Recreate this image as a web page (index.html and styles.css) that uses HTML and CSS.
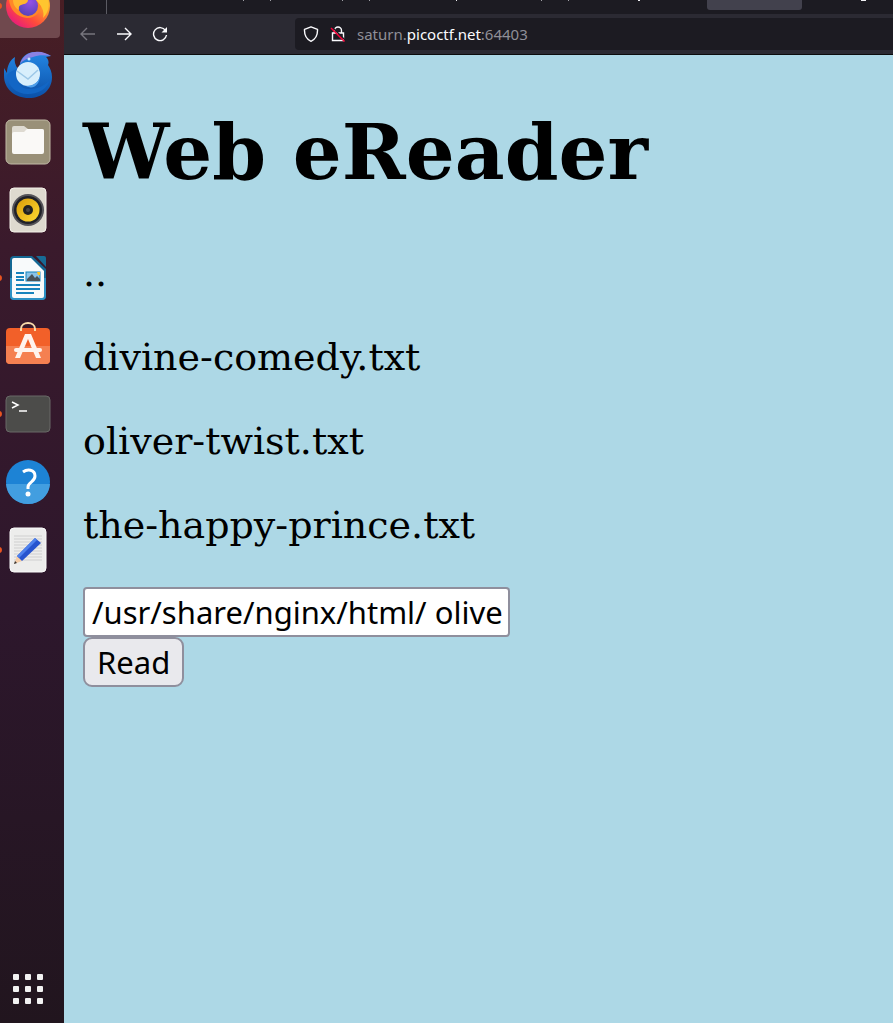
FILE: index.html
```html
<!DOCTYPE html>
<html lang="en">
<head>
<meta charset="utf-8">
<title>Web eReader</title>
<link rel="stylesheet" href="styles.css">
</head>
<body>
<div class="desktop">
  <nav class="dock" aria-label="Dock">
    <button class="dock-item dock-item-active" aria-label="Firefox">
      <svg class="firefox" viewBox="0 0 60 38">
        <defs>
          <linearGradient id="fx" x1="1" y1="0" x2="0.2" y2="1"><stop offset="0" stop-color="#ffd83a"/><stop offset=".4" stop-color="#ff9a2c"/><stop offset=".7" stop-color="#ff4a3c"/><stop offset="1" stop-color="#e31587"/></linearGradient>
          <radialGradient id="fp" cx=".6" cy=".3" r=".7"><stop offset="0" stop-color="#9450e8"/><stop offset="1" stop-color="#5944b8"/></radialGradient>
        </defs>
        <circle cx="-1" cy="6" r="3" fill="#e95420"/>
        <circle cx="28" cy="6" r="22" fill="url(#fx)"/>
        <path d="M9 0c1 9 7 17 18 18 10 0 15-8 15-18z" fill="#ff8728"/>
        <circle cx="28" cy="6" r="10" fill="url(#fp)"/>
        <path d="M13 0h15c0 4-5 4-7 5-3 1-2 4-2 5-4-2-6-6-6-10z" fill="#ffb52e"/>
        <path d="M36 0h12c2 6 0 13-5 18 2-7-2-13-7-18z" fill="#ffc62f"/>
      </svg>
    </button>
    <button class="dock-item" aria-label="Thunderbird">
      <svg viewBox="0 0 64 68">
        <defs><linearGradient id="tb" x1="0" y1="0" x2="0" y2="1"><stop offset="0" stop-color="#2487e4"/><stop offset="1" stop-color="#0b50a8"/></linearGradient></defs>
        <path d="M20 24c1-7 7-12 15-12 7 0 12 2 16 4l-5 1c3 3 3 6 2 8 2 3 4 7 4 12 0 13-10 21-23 21C14 58 4 48 4 36v-8l3 5c0-7 3-13 8-16-1 4 0 8 3 12z" fill="url(#tb)"/>
        <path d="M7 36c2-5 7-5 11-8l2 2c-6 9-1 19 9 19 11 0 17-5 21-9-3 9-12 14-22 14-12 0-20-8-21-18z" fill="#1266c5"/>
        <path d="M20 24c2-7 8-12 15-12 6-1 11 1 16 4-7-1-13-1-18 1-5 1-10 3-13 7z" fill="#8a82e4"/>
        <circle cx="28" cy="34" r="12" fill="#d8effc"/>
        <path d="M17 31l11 8 10-9" fill="none" stroke="#9dc8e7" stroke-width="1.5"/>
        <path d="M26 46c6 0 12-3 14-9-1 8-7 13-14 9z" fill="#4d9eea"/>
        <circle cx="29" cy="19" r="1.5" fill="#c9e8ff"/>
      </svg>
    </button>
    <button class="dock-item" aria-label="Files">
      <svg viewBox="0 0 64 68">
        <rect x="6" y="12" width="44" height="44" rx="5" fill="#999078" stroke="#c1b9a6"/>
        <path d="M12 30V20q0-2 2-2h10l4 3h14q2 0 2 2v7z" fill="#dedad1"/>
        <path d="M12 26q0-2 2-2h10l3-3h15q2 0 2 2v21q0 2-2 2H14q-2 0-2-2z" fill="#faf9f7"/>
      </svg>
    </button>
    <button class="dock-item" aria-label="Rhythmbox">
      <svg viewBox="0 0 64 68">
        <defs><linearGradient id="rb" x1="0" y1="0" x2="1" y2="1"><stop offset="0" stop-color="#d99c09"/><stop offset="1" stop-color="#ffda33"/></linearGradient></defs>
        <rect x="10" y="12" width="36" height="44" rx="4" fill="#dedacf" stroke="#f4f1e9"/>
        <circle cx="28" cy="34" r="16" fill="#555459"/><circle cx="28" cy="34" r="14" fill="#202128"/>
        <circle cx="28" cy="34" r="11.500" fill="url(#rb)"/><circle cx="28" cy="34" r="5" fill="#222"/><circle cx="28" cy="34" r="2" fill="#454545"/>
      </svg>
    </button>
    <button class="dock-item" aria-label="Writer">
      <svg viewBox="0 0 64 68">
        <circle cx="-1" cy="34" r="3" fill="#e95420"/>
        <path d="M14 12h18l14 13v27q0 4-4 4H14q-4 0-4-4V16q0-4 4-4z" fill="#146894"/>
        <path d="M10 34h36v18q0 4-4 4H14q-4 0-4-4z" fill="#2c91c5"/>
        <path d="M14 14h17l13 13v25q0 2-2 2H14q-2 0-2-2V16q0-2 2-2z" fill="#f8fafb"/>
        <path d="M36 12h8q2 0 2 2v9z" fill="#176b96"/>
        <path d="M16 29h8m-8 4h8m-8 3h8m-8 5h24m-24 4h24m-24 4h18" stroke="#1683bd" stroke-width="2"/>
        <rect x="26" y="28" width="14" height="9" fill="#89c3e9" stroke="#1683bd"/><path d="M27 37v-2l5-5 3 4 2-2 3 3v2z" fill="#49535a"/><path d="M37 28h3v3h-2z" fill="#ffc51e"/>
      </svg>
    </button>
    <button class="dock-item" aria-label="Software">
      <svg viewBox="0 0 64 68">
        <rect x="6" y="16" width="44" height="36" rx="4" fill="#f26029"/>
        <path d="M6 34h44v14q0 4-4 4H10q-4 0-4-4z" fill="#f58051"/>
        <path d="M21 19v-2c0-8 14-8 14 0v2" fill="none" stroke="#f9dbaa" stroke-width="2"/>
        <path d="M15 46l10-24h6l10 24h-5l-8-19-8 19z" fill="#fff3ed"/><rect x="14" y="36" width="28" height="4" rx="2" fill="#fff3ed"/>
      </svg>
    </button>
    <button class="dock-item" aria-label="Terminal">
      <svg viewBox="0 0 64 68">
        <circle cx="-1" cy="34" r="3" fill="#e95420"/>
        <rect x="6" y="16" width="44" height="36" rx="4" fill="#4c4c4a" stroke="#686866"/>
        <path d="M12 22l6 3-6 3M19 31h8" fill="none" stroke="#fff" stroke-width="1.500"/>
      </svg>
    </button>
    <button class="dock-item" aria-label="Help">
      <svg viewBox="0 0 64 68">
        <circle cx="28" cy="34" r="22" fill="#1d83d5"/><path d="M6 36h44c-1 12-10 20-22 20S7 48 6 36z" fill="#429ee0"/>
        <path d="M23 24c4-3 12-3 12 4 0 6-7 6-7 11v2" fill="none" stroke="#fff" stroke-width="3"/><circle cx="28" cy="46" r="2.500" fill="#fff"/>
      </svg>
    </button>
    <button class="dock-item" aria-label="Text Editor">
      <svg viewBox="0 0 64 68">
        <circle cx="-1" cy="34" r="3" fill="#e95420"/>
        <rect x="10" y="12" width="36" height="44" rx="4" fill="#ededec" stroke="#fafafa"/>
        <path d="M14 20h28m-28 3h28m-28 3h28m-28 3h28m-28 3h28m-28 3h28m-28 3h28m-28 3h28m-28 3h28" stroke="#cfcfcf"/>
        <path d="M14 48l3-8 5 5z" fill="#f5cda8"/><path d="M14 48l1-3 2 2z" fill="#333"/>
        <path d="M17 40l18-18 6 5-19 18z" fill="#2754cf"/><path d="M17 40l18-18 2 2-18 18z" fill="#4e81ed"/>
      </svg>
    </button>
    <button class="dock-item dock-apps" aria-label="Show Applications">
      <svg viewBox="0 0 64 68"><g fill="#f2f2f2"><rect x="13" y="19" width="6" height="6" rx="1"/><rect x="25" y="19" width="6" height="6" rx="1"/><rect x="37" y="19" width="6" height="6" rx="1"/><rect x="13" y="31" width="6" height="6" rx="1"/><rect x="25" y="31" width="6" height="6" rx="1"/><rect x="37" y="31" width="6" height="6" rx="1"/><rect x="13" y="43" width="6" height="6" rx="1"/><rect x="25" y="43" width="6" height="6" rx="1"/><rect x="37" y="43" width="6" height="6" rx="1"/></g></svg>
    </button>
  </nav>
  <div class="browser">
    <div class="tabs">
      <svg width="829" height="14" viewBox="0 0 829 14" aria-hidden="true">
        <path d="M42.500 0v14" stroke="#5b5b63"/>
        <path d="M643 0h95v7q0 3-3 3h-89q-3 0-3-3z" fill="#42414d"/>
        <path d="M179 0h1v1h-1zM206 0h1v1h-1zM278 0h1v1h-1zM305 0h1v1h-1zM477 0h1v1h-1zM504 0h1v1h-1z" fill="#a0a0a6"/>
        <path d="M392 0h1v1h-1zM574 0h2v1h-2zM797 0h5v1h-5z" fill="#f0f0f4"/>
      </svg>
    </div>
    <header class="toolbar">
      <div class="nav-buttons">
        <button class="tool" aria-label="Back" disabled><svg viewBox="0 0 16 16"><path d="M15 8H1m6-6L1 8l6 6" stroke="#77767e"/></svg></button>
        <button class="tool" aria-label="Forward"><svg viewBox="0 0 16 16"><path d="M1 8h14M9 2l6 6-6 6" stroke="#fbfbfe"/></svg></button>
        <button class="tool" aria-label="Reload"><svg viewBox="0 0 16 16"><path d="M13.500 4.500A6.500 6.500 0 1 0 14.500 9" stroke="#fbfbfe"/><path d="M15 1v5.500H9.500z" fill="#fbfbfe"/></svg></button>
      </div>
      <div class="address">
        <svg viewBox="0 0 16 16"><path d="M8 .8l6.500 2.500c.3 6-1.500 9.800-6.500 12C3 13.100 1.200 9.300 1.500 3.300z" stroke="#fbfbfe" stroke-linejoin="round"/></svg>
        <svg viewBox="0 0 16 16"><path d="M4.500 7V4.500a3.500 3.500 0 0 1 7 0V7M2.500 7h11v7.500h-11z" stroke="#fbfbfe"/><path d="M2.500 1.500l13 13" stroke="#1c1b22"/><path d="M1 2l13.500 13.500" stroke="#ff0039"/></svg>
        <span class="url">saturn.<span class="domain">picoctf.net</span>:64403</span>
      </div>
    </header>
    <main class="page">
      <h1>Web eReader</h1>
      <p>..</p>
      <p>divine-comedy.txt</p>
      <p>oliver-twist.txt</p>
      <p>the-happy-prince.txt</p>
      <form class="reader">
        <input class="path" type="text" aria-label="File path" value="/usr/share/nginx/html/ olive">
        <button class="read" type="button">Read</button>
      </form>
    </main>
  </div>
</div>
</body>
</html>
```
FILE: styles.css
```css
* { box-sizing: border-box; }
body { margin: 0; }
.desktop { display: flex; min-height: 100vh; }
button { font: inherit; cursor: pointer; }

.dock {
  display: flex;
  flex-direction: column;
  flex: none;
  width: 64px;
  background: linear-gradient(#481e24, #3a1a2c 24%, #2d172c 60%, #21151e);
}
.dock-item {
  display: block;
  width: 64px;
  height: 68px;
  padding: 0;
  border: 0;
  background: none;
}
.dock-item svg { display: block; width: 64px; height: 68px; }
.dock-item-active { display: flex; align-items: flex-start; height: 40px; }
.dock-item-active .firefox {
  width: 60px;
  height: 38px;
  background: #70494e;
  border-radius: 0 0 4px 0;
}
.dock-apps { margin-top: auto; }

.browser { display: flex; flex-direction: column; flex: 1; min-width: 0; }
.tabs { height: 14px; overflow: hidden; background: #1c1b22; }
.tabs svg { display: block; }
.toolbar {
  display: flex;
  align-items: center;
  height: 41px;
  background: #2b2a33;
  border-bottom: 1px solid #0c0c0d;
}
.nav-buttons { display: flex; gap: 20px; flex: none; width: 231px; padding-left: 16px; }
.tool { display: flex; padding: 0; border: 0; background: none; }
.toolbar svg { flex: none; width: 16px; height: 16px; fill: none; stroke-width: 1.4; }
.address {
  display: flex;
  align-items: center;
  flex: 1;
  gap: 11px;
  height: 32px;
  padding-left: 8px;
  background: #1c1b22;
  border-radius: 4px 0 0 4px;
}
.url { color: #8f8f97; font: 15px "Noto Sans", sans-serif; white-space: nowrap; }
.domain { color: #fbfbfe; }

.page {
  flex: 1;
  padding: 52px 19px;
  background: #add8e6;
  color: #000;
  font: 38px/46px "DejaVu Serif", serif;
}
h1 { margin: 0 0 53px; font-size: 77px; line-height: 90px; }
p { margin: 0 0 38px; }
.reader { display: flex; flex-direction: column; align-items: flex-start; padding-top: 1px; }
.path, .read {
  height: 50px;
  border: 2px solid #8f8f9d;
  color: #000;
  font: 31px "Noto Sans", sans-serif;
}
.path { width: 427px; max-width: 100%; padding: 0 0 0 7px; border-radius: 4px; background: #fff; }
.read { padding: 0 12px; border-radius: 9px; background: #e9e9ed; }
```
